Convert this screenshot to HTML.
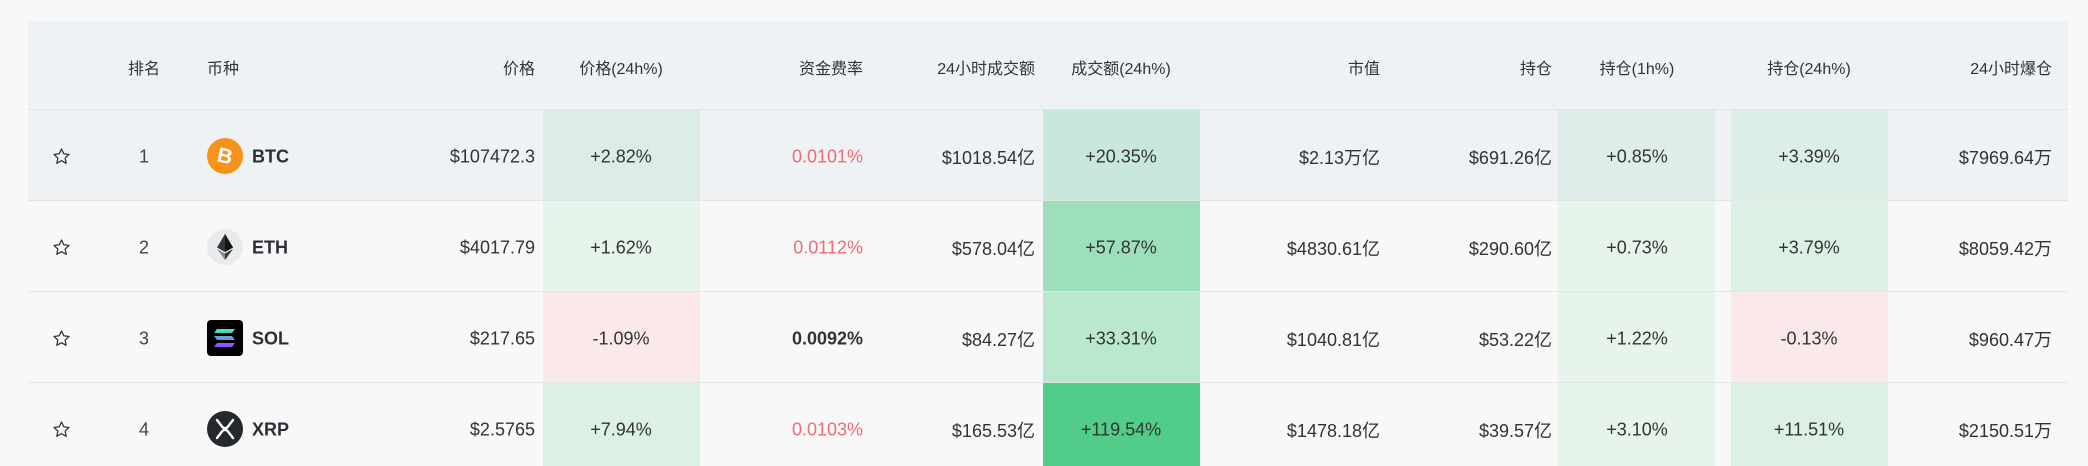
<!DOCTYPE html>
<html><head><meta charset="utf-8"><style>
*{margin:0;padding:0;box-sizing:border-box}
body{width:2088px;height:466px;background:#f8f8f8;font-family:"Liberation Sans","Noto Sans CJK SC",sans-serif;color:#333;overflow:hidden;position:relative}
.hdr{position:absolute;left:28px;top:21px;width:2040px;height:89px;background:#eef2f5;border-bottom:1px solid #e3e5e7}
.row{position:absolute;left:28px;width:2040px;border-bottom:1px solid #e3e5e7;background:#f8f8f8}
.t{position:absolute;font-size:18px;white-space:nowrap;transform:translateY(-50%)}
.h{font-size:16px;color:#333}
.cell{position:absolute;top:0;bottom:0}
.pink{color:#ef6b76}
.b{font-weight:bold}
</style></head><body>
<div class="hdr"></div>
<div id="rows"></div>
<script>
const H=[["排名",144,"c"],["币种",207,"l"],["价格",535,"r"],["价格(24h%)",621,"c"],["资金费率",863,"r"],["24小时成交额",1035,"r"],["成交额(24h%)",1121,"c"],["市值",1380,"r"],["持仓",1552,"r"],["持仓(1h%)",1637,"c"],["持仓(24h%)",1809,"c"],["24小时爆仓",2052,"r"]];
function pos(x,a){if(a=="r")return `right:${2088-x}px;`;if(a=="c")return `left:${x-100}px;width:200px;text-align:center;`;return `left:${x}px;`}
let s="";
H.forEach(h=>{s+=`<div class="t h" style="top:67px;${pos(h[1],h[2])}">${h[0]}</div>`});
const R=[
["1","BTC","$107472.3","+2.82%","0.0101%",1,"$1018.54亿","+20.35%","$2.13万亿","$691.26亿","+0.85%","+3.39%","$7969.64万",["#dcede7","#c8e8db","#deede9","#dcefe6"],"#eef2f5"],
["2","ETH","$4017.79","+1.62%","0.0112%",1,"$578.04亿","+57.87%","$4830.61亿","$290.60亿","+0.73%","+3.79%","$8059.42万",["#e6f4ec","#9edfbb","#e6f4ec","#dcf1e4"],"#f8f8f8"],
["3","SOL","$217.65","-1.09%","0.0092%",0,"$84.27亿","+33.31%","$1040.81亿","$53.22亿","+1.22%","-0.13%","$960.47万",["#fbe9e9","#b9e8cf","#e6f4ec","#fbe9e9"],"#f8f8f8"],
["4","XRP","$2.5765","+7.94%","0.0103%",1,"$165.53亿","+119.54%","$1478.18亿","$39.57亿","+3.10%","+11.51%","$2150.51万",["#dcf1e4","#52cc8a","#e6f4ec","#dcf1e4"],"#f8f8f8"]];
const tops=[110,201,292,383],hs=[91,91,91,83],mids=[46,46,46,46];
const icons={
BTC:`<svg width="36" height="36" viewBox="0 0 36 36"><circle cx="18" cy="18" r="18" fill="#f7931a"/><text x="18" y="25" font-size="21" font-weight="bold" fill="#fff" text-anchor="middle" font-family="Liberation Sans" transform="rotate(12 18 18)">B</text></svg>`,
ETH:`<svg width="36" height="36" viewBox="0 0 36 36"><circle cx="18" cy="18" r="18" fill="#e8ebee"/><path d="M18 5L10 18.5L18 23L26 18.5Z" fill="#343434"/><path d="M18 5L18 23L26 18.5Z" fill="#141414"/><path d="M10 20L18 31L26 20L18 24.5Z" fill="#8c8c8c"/><path d="M18 24.5L18 31L26 20Z" fill="#3c3c3b"/></svg>`,
SOL:`<svg width="36" height="36" viewBox="0 0 36 36"><defs><linearGradient id="g" x1="0" y1="0" x2="0" y2="1"><stop offset="0" stop-color="#3ef0b0"/><stop offset="1" stop-color="#9945ff"/></linearGradient></defs><rect width="36" height="36" rx="4" fill="#000"/><path d="M10 9H28L25 13H7ZM7 16H25L28 20H10ZM10 23H28L25 27H7Z" fill="url(#g)"/></svg>`,
XRP:`<svg width="36" height="36" viewBox="0 0 36 36"><circle cx="18" cy="18" r="18" fill="#23292f"/><path d="M10 9L15 15.5Q18 19 21 15.5L26 9M10 27L15 20.5Q18 17 21 20.5L26 27" stroke="#fff" stroke-width="2.4" fill="none" stroke-linecap="round"/></svg>`};
const star=`<svg width="19" height="19" viewBox="0 0 24 24"><path d="M12 2.5L14.9 8.6L21.5 9.4L16.6 14L17.9 20.6L12 17.3L6.1 20.6L7.4 14L2.5 9.4L9.1 8.6Z" fill="none" stroke="#333" stroke-width="1.6" stroke-linejoin="round"/></svg>`;
R.forEach((r,i)=>{
 s+=`<div class="row" style="top:${tops[i]}px;height:${hs[i]}px;background:${r[14]};${i==3?'border-bottom:none':''}">
 <div class="cell" style="left:515px;width:157px;background:${r[13][0]}"></div>
 <div class="cell" style="left:1015px;width:157px;background:${r[13][1]}"></div>
 <div class="cell" style="left:1530px;width:157px;background:${r[13][2]}"></div>
 <div class="cell" style="left:1703px;width:157px;background:${r[13][3]}"></div></div>`;
 let y=tops[i]+mids[i]+1;
 s+=`<div style="position:absolute;left:52px;top:${y-10}px;width:19px;height:19px">${star}</div>`;
 s+=`<div class="t" style="top:${y}px;color:#444;${pos(144,'c')}">${r[0]}</div>`;
 s+=`<div style="position:absolute;left:207px;top:${y-19}px;width:36px;height:36px">${icons[r[1]]}</div>`;
 s+=`<div class="t b" style="top:${y}px;left:252px;color:#2b2f36">${r[1]}</div>`;
 const v=[[r[2],535,"r",""],[r[3],621,"c",""],[r[4],863,"r",r[5]?"pink":"b"],[r[6],1035,"r",""],[r[7],1121,"c",""],[r[8],1380,"r",""],[r[9],1552,"r",""],[r[10],1637,"c",""],[r[11],1809,"c",""],[r[12],2052,"r",""]];
 v.forEach(c=>{s+=`<div class="t ${c[3]}" style="top:${y}px;${pos(c[1],c[2])}">${c[0]}</div>`});
});
document.getElementById("rows").outerHTML=s;
</script>
</body></html>
